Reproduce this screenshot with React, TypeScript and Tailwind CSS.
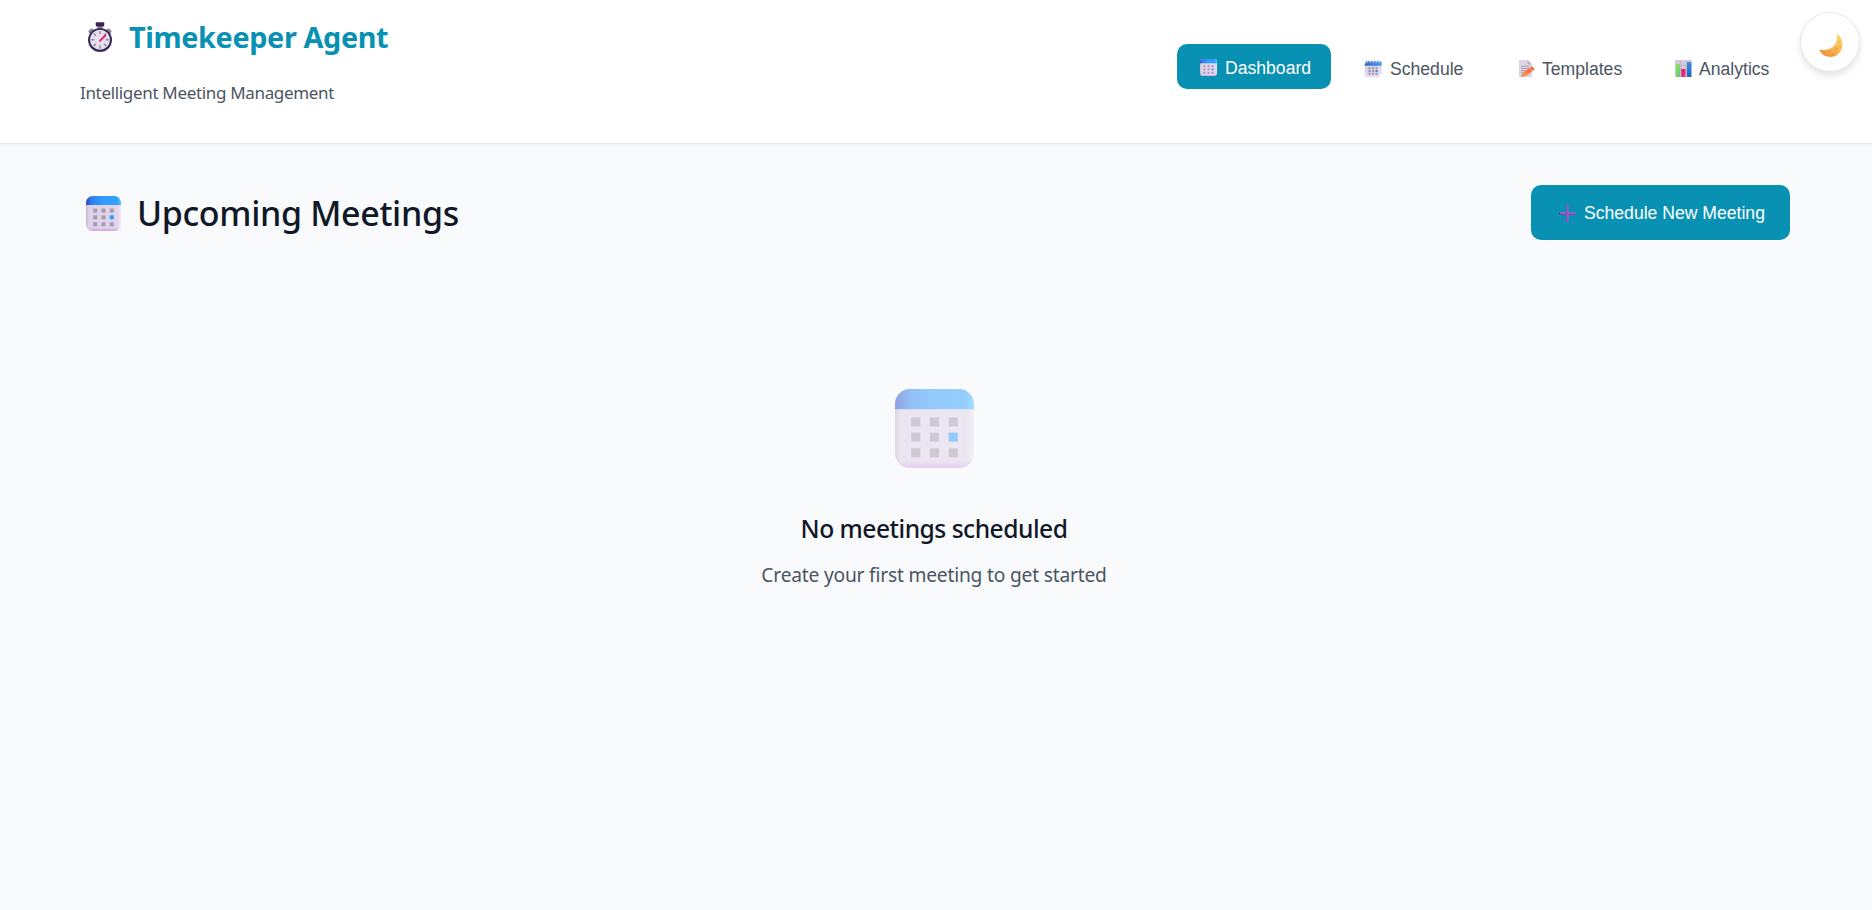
import type { ReactNode } from "react";

function CalendarIcon({ id, className }: { id: string; className: string }) {
  return (
    <svg viewBox="0 0 78 78" className={className} aria-hidden="true">
      <defs>
        <linearGradient id={`${id}-top`} x1="0" y1="0" x2="1" y2="0">
          <stop offset="0" stopColor="#3147c4" />
          <stop offset="0.17" stopColor="#2f82ee" />
          <stop offset="0.5" stopColor="#309dfd" />
          <stop offset="0.88" stopColor="#31a0ff" />
          <stop offset="1" stopColor="#52c4ff" />
        </linearGradient>
        <linearGradient id={`${id}-body`} x1="0" y1="0" x2="1" y2="0">
          <stop offset="0" stopColor="#c2b8c8" />
          <stop offset="0.08" stopColor="#dfd2e8" />
          <stop offset="0.9" stopColor="#e1d4ec" />
          <stop offset="1" stopColor="#efe8f3" />
        </linearGradient>
        <linearGradient id={`${id}-base`} x1="0" y1="0" x2="0" y2="1">
          <stop offset="0.9" stopColor="#d0a0ea" stopOpacity="0" />
          <stop offset="1" stopColor="#cf9dea" stopOpacity="0.9" />
        </linearGradient>
      </defs>
      <rect width="78" height="78" rx="15" fill={`url(#${id}-body)`} />
      <rect width="78" height="78" rx="15" fill={`url(#${id}-base)`} />
      <path d="M0 20V15A15 15 0 0 1 15 0H63A15 15 0 0 1 78 15V20Z" fill={`url(#${id}-top)`} />
      {[28, 43, 58.5].map((y) =>
        [16, 34.5, 53].map((x) => (
          <rect key={`${x}-${y}`} x={x} y={y} width="9" height="9" fill={x === 53 && y === 43 ? "#309dfd" : "#a59cae"} />
        )),
      )}
    </svg>
  );
}

function SpiralCalendarIcon({ className }: { className: string }) {
  return (
    <svg viewBox="0 0 36 34" className={className} aria-hidden="true">
      <defs>
        <linearGradient id="sp-body" x1="0" y1="0" x2="1" y2="1">
          <stop offset="0" stopColor="#dcd0e4" />
          <stop offset="0.8" stopColor="#e5dcec" />
          <stop offset="1" stopColor="#cdbfd8" />
        </linearGradient>
        <linearGradient id="sp-top" x1="0" y1="0" x2="1" y2="0">
          <stop offset="0" stopColor="#2f64c8" />
          <stop offset="1" stopColor="#3f9bf0" />
        </linearGradient>
      </defs>
      <path d="M1.5 8H35V28L29 34H5Q1.5 34 1.5 30Z" fill="url(#sp-body)" />
      <path d="M35 28L29 34V30Q29 28 31 28Z" fill="#f5f0f8" />
      <path d="M3 5Q3 2.5 6 2.5H32Q35 2.5 35 5V11.5H1Z" fill="url(#sp-top)" />
      {[6, 12, 18, 24, 30].map((x) => (
        <path key={x} d={`M${x} 6.5Q${x} 0.5 ${x + 3} 1.5`} fill="none" stroke="#d0cfdc" strokeWidth="2" />
      ))}
      {[14.5, 20, 25.5].map((y) =>
        [9, 16, 23].map((x) => (
          <rect key={`${x}-${y}`} x={x} y={y} width="4.4" height="4" fill={x === 23 && y === 20 ? "#3089ee" : "#9d94ab"} />
        )),
      )}
    </svg>
  );
}

function MemoIcon({ className }: { className: string }) {
  return (
    <svg viewBox="0 0 32 34" className={className} aria-hidden="true">
      <defs>
        <linearGradient id="memo-pencil" x1="0" y1="1" x2="1" y2="0">
          <stop offset="0" stopColor="#ffa04b" />
          <stop offset="0.7" stopColor="#ff6a35" />
          <stop offset="1" stopColor="#f5443f" />
        </linearGradient>
      </defs>
      <path d="M0 0H17L26 9V34H0Z" fill="#ddd3e4" />
      <path d="M17 0L26 9H19Q17 9 17 7Z" fill="#b9adc4" />
      <path d="M4 12.5H20M4 17H20M4 21.5H15M4 26H11" stroke="#9e93ab" strokeWidth="1.6" />
      <path d="M5 33L7 26L23.5 14Q26 12.5 28 14.5L30 17Q31.5 19 29.5 20.5L12.5 32.5Z" fill="url(#memo-pencil)" />
      <path d="M22 15.5L27 22" stroke="#f3d3da" strokeWidth="1.8" />
      <path d="M5 33L5.8 30.4L8 32.6Z" fill="#5b4050" />
    </svg>
  );
}

function ChartIcon({ className }: { className: string }) {
  return (
    <svg viewBox="0 0 34 34" className={className} aria-hidden="true">
      <defs>
        <linearGradient id="bar-g" x1="0" y1="0" x2="1" y2="1">
          <stop offset="0" stopColor="#8ce85b" />
          <stop offset="1" stopColor="#62c878" />
        </linearGradient>
        <linearGradient id="bar-b" x1="0" y1="0" x2="0" y2="1">
          <stop offset="0" stopColor="#3c8fe0" />
          <stop offset="1" stopColor="#1668c6" />
        </linearGradient>
        <linearGradient id="bar-r" x1="0" y1="0" x2="0" y2="1">
          <stop offset="0" stopColor="#e0206e" />
          <stop offset="1" stopColor="#f0307c" />
        </linearGradient>
      </defs>
      <rect width="34" height="34" rx="1" fill="#d6cbdc" />
      <path d="M0 11H34M0 22.5H34M11.5 0V34M22.5 0V34" stroke="#b5a9be" strokeWidth="1.4" />
      <rect x="1.5" y="8" width="8.5" height="26" rx="1" fill="url(#bar-g)" />
      <rect x="12.5" y="18" width="8.5" height="16" rx="1" fill="url(#bar-r)" />
      <rect x="24" y="4" width="8.5" height="30" rx="1" fill="url(#bar-b)" />
    </svg>
  );
}

function StopwatchIcon({ className }: { className: string }) {
  const ticks = [0, 45, 90, 135, 180, 225, 270, 315];
  return (
    <svg viewBox="0 0 48 60" className={className} aria-hidden="true">
      <path d="M2 19L7 14L12 17L6 24ZM46 19L41 14L36 17L42 24Z" fill="#8d8496" stroke="#8d8496" strokeWidth="2.6" strokeLinejoin="round" />
      <rect x="19" y="6" width="10" height="9" fill="#8a8193" />
      <rect x="15.5" y="0.5" width="17" height="8.5" rx="2" fill="#3c2253" />
      <circle cx="24" cy="36" r="24" fill="#3d2a5c" />
      <circle cx="24" cy="35.5" r="20" fill="#e6dfee" />
      {ticks.map((a) => (
        <path key={a} d="M24 18V24" stroke="#8d8498" strokeWidth="3" transform={`rotate(${a} 24 35.5)`} />
      ))}
      <path d="M24 37.5L34.5 27" stroke="#e82a68" strokeWidth="4" strokeLinecap="round" />
    </svg>
  );
}

function MoonIcon({ className }: { className: string }) {
  return (
    <svg viewBox="0 0 72 70" className={className} aria-hidden="true">
      <defs>
        <linearGradient id="moon" x1="0.9" y1="0" x2="0.4" y2="1">
          <stop offset="0" stopColor="#ffd965" />
          <stop offset="0.6" stopColor="#fcb955" />
          <stop offset="1" stopColor="#ee9340" />
        </linearGradient>
      </defs>
      <path d="M54 1Q53 0 56 1Q72 14 71 34Q68 66 36 70Q12 70 1 51Q0 47 4 47Q26 53 42 39Q57 26 54 1Z" fill="url(#moon)" />
      <circle cx="52" cy="46" r="5.5" fill="#f0a145" />
      <circle cx="31" cy="56" r="4" fill="#f0a145" />
      <circle cx="62" cy="24" r="3.5" fill="#f3b350" />
      <circle cx="64" cy="38" r="2" fill="#f0a145" />
      <circle cx="42" cy="63" r="2.5" fill="#e8903d" />
    </svg>
  );
}

function PlusIcon({ className }: { className: string }) {
  return (
    <svg viewBox="0 0 34 34" className={className} aria-hidden="true">
      <rect x="0" y="14.6" width="34" height="4.8" rx="1" fill="#a05fd2" />
      <rect x="0" y="17.6" width="34" height="1.8" rx="0.9" fill="#7f3fb8" />
      <rect x="14.6" y="0" width="4.8" height="34" rx="1" fill="#9a58d0" />
      <rect x="14.6" y="0" width="1.8" height="34" rx="0.9" fill="#7a56b4" />
      <rect x="0" y="15" width="2" height="4" fill="#4f3f8c" />
    </svg>
  );
}

function NavItem({ icon, label, className }: { icon: ReactNode; label: string; className: string }) {
  return (
    <button className={`flex h-[45px] items-center rounded-[10px] pt-0.5 font-['Liberation_Sans',sans-serif] text-[17.6px] leading-5 ${className}`}>
      {icon}
      <span className="whitespace-nowrap">{label}</span>
    </button>
  );
}

export default function App() {
  return (
    <div className="relative min-h-[910px] bg-[#f9fafc] font-['Noto_Sans',sans-serif] text-[#111827]">
      <header className="flex h-36 items-start justify-between border-b border-[#e5e7eb] bg-white pr-[82px] pl-20 shadow-[0_1px_3px_rgba(0,0,0,0.06)]">
        <div className="pt-[17px]">
          <h1 className="flex h-10 items-center text-[28.8px] leading-10 font-bold tracking-[-0.36px] text-[#0891b2]">
            <StopwatchIcon className="mr-[17px] ml-2 h-[30px] w-6 shrink-0" />
            <span className="whitespace-nowrap">Timekeeper Agent</span>
          </h1>
          <p className="mt-6 text-[17px] leading-6 tracking-[-0.33px] whitespace-nowrap text-[#4b5563]">Intelligent Meeting Management</p>
        </div>
        <nav className="flex pt-[45px]">
          <NavItem
            className="relative -top-px mr-2.5 w-[154px] bg-[#0891b2] pl-[23px] text-white"
            icon={<CalendarIcon id="nav" className="mr-2 h-[17px] w-[17px]" />}
            label="Dashboard"
          />
          <NavItem
            className="mr-2.5 w-[144px] pl-[23px] text-[#4b5563]"
            icon={<SpiralCalendarIcon className="mr-2 h-[17px] w-[18px]" />}
            label="Schedule"
          />
          <NavItem
            className="mr-2.5 w-[147px] pl-6 text-[#4b5563]"
            icon={<MemoIcon className="mr-[7px] h-[17px] w-4" />}
            label="Templates"
          />
          <NavItem
            className="w-[138px] pl-[23px] text-[#4b5563]"
            icon={<ChartIcon className="mr-[7px] h-[17px] w-[17px]" />}
            label="Analytics"
          />
        </nav>
      </header>

      <button
        className="absolute top-3 right-3 flex h-[60px] w-[60px] items-center justify-center rounded-full border border-[#e5e7eb] bg-white pt-[7px] pl-px shadow-[0_4px_6px_rgba(0,0,0,0.1)]"
        aria-label="Toggle dark mode"
      >
        <MoonIcon className="h-[23px] w-6" />
      </button>

      <main className="pr-[82px] pl-20">
        <div className="flex items-start justify-between pt-[41px]">
          <h2 className="flex h-14 items-center text-[34px] leading-[54px] font-medium tracking-[-0.34px]">
            <CalendarIcon id="heading" className="mr-4 ml-1.5 h-[35px] w-[35px]" />
            <span className="whitespace-nowrap">Upcoming Meetings</span>
          </h2>
          <button className="flex h-[55px] w-[259px] items-center rounded-[10px] bg-[#0891b2] pt-px pl-7 font-['Liberation_Sans',sans-serif] text-[17.6px] text-white">
            <PlusIcon className="mr-2 h-[17px] w-[17px]" />
            <span className="whitespace-nowrap">Schedule New Meeting</span>
          </button>
        </div>

        <section className="flex flex-col items-center pt-[148px] pr-0.5">
          <CalendarIcon id="empty" className="h-[79px] w-[79px] opacity-50" />
          <h3 className="mt-[43px] text-[24.6px] leading-9 font-medium tracking-[-0.5px] whitespace-nowrap">No meetings scheduled</h3>
          <p className="mt-3.5 text-[19.2px] leading-7 tracking-[-0.2px] whitespace-nowrap text-[#4b5563]">Create your first meeting to get started</p>
        </section>
      </main>
    </div>
  );
}
